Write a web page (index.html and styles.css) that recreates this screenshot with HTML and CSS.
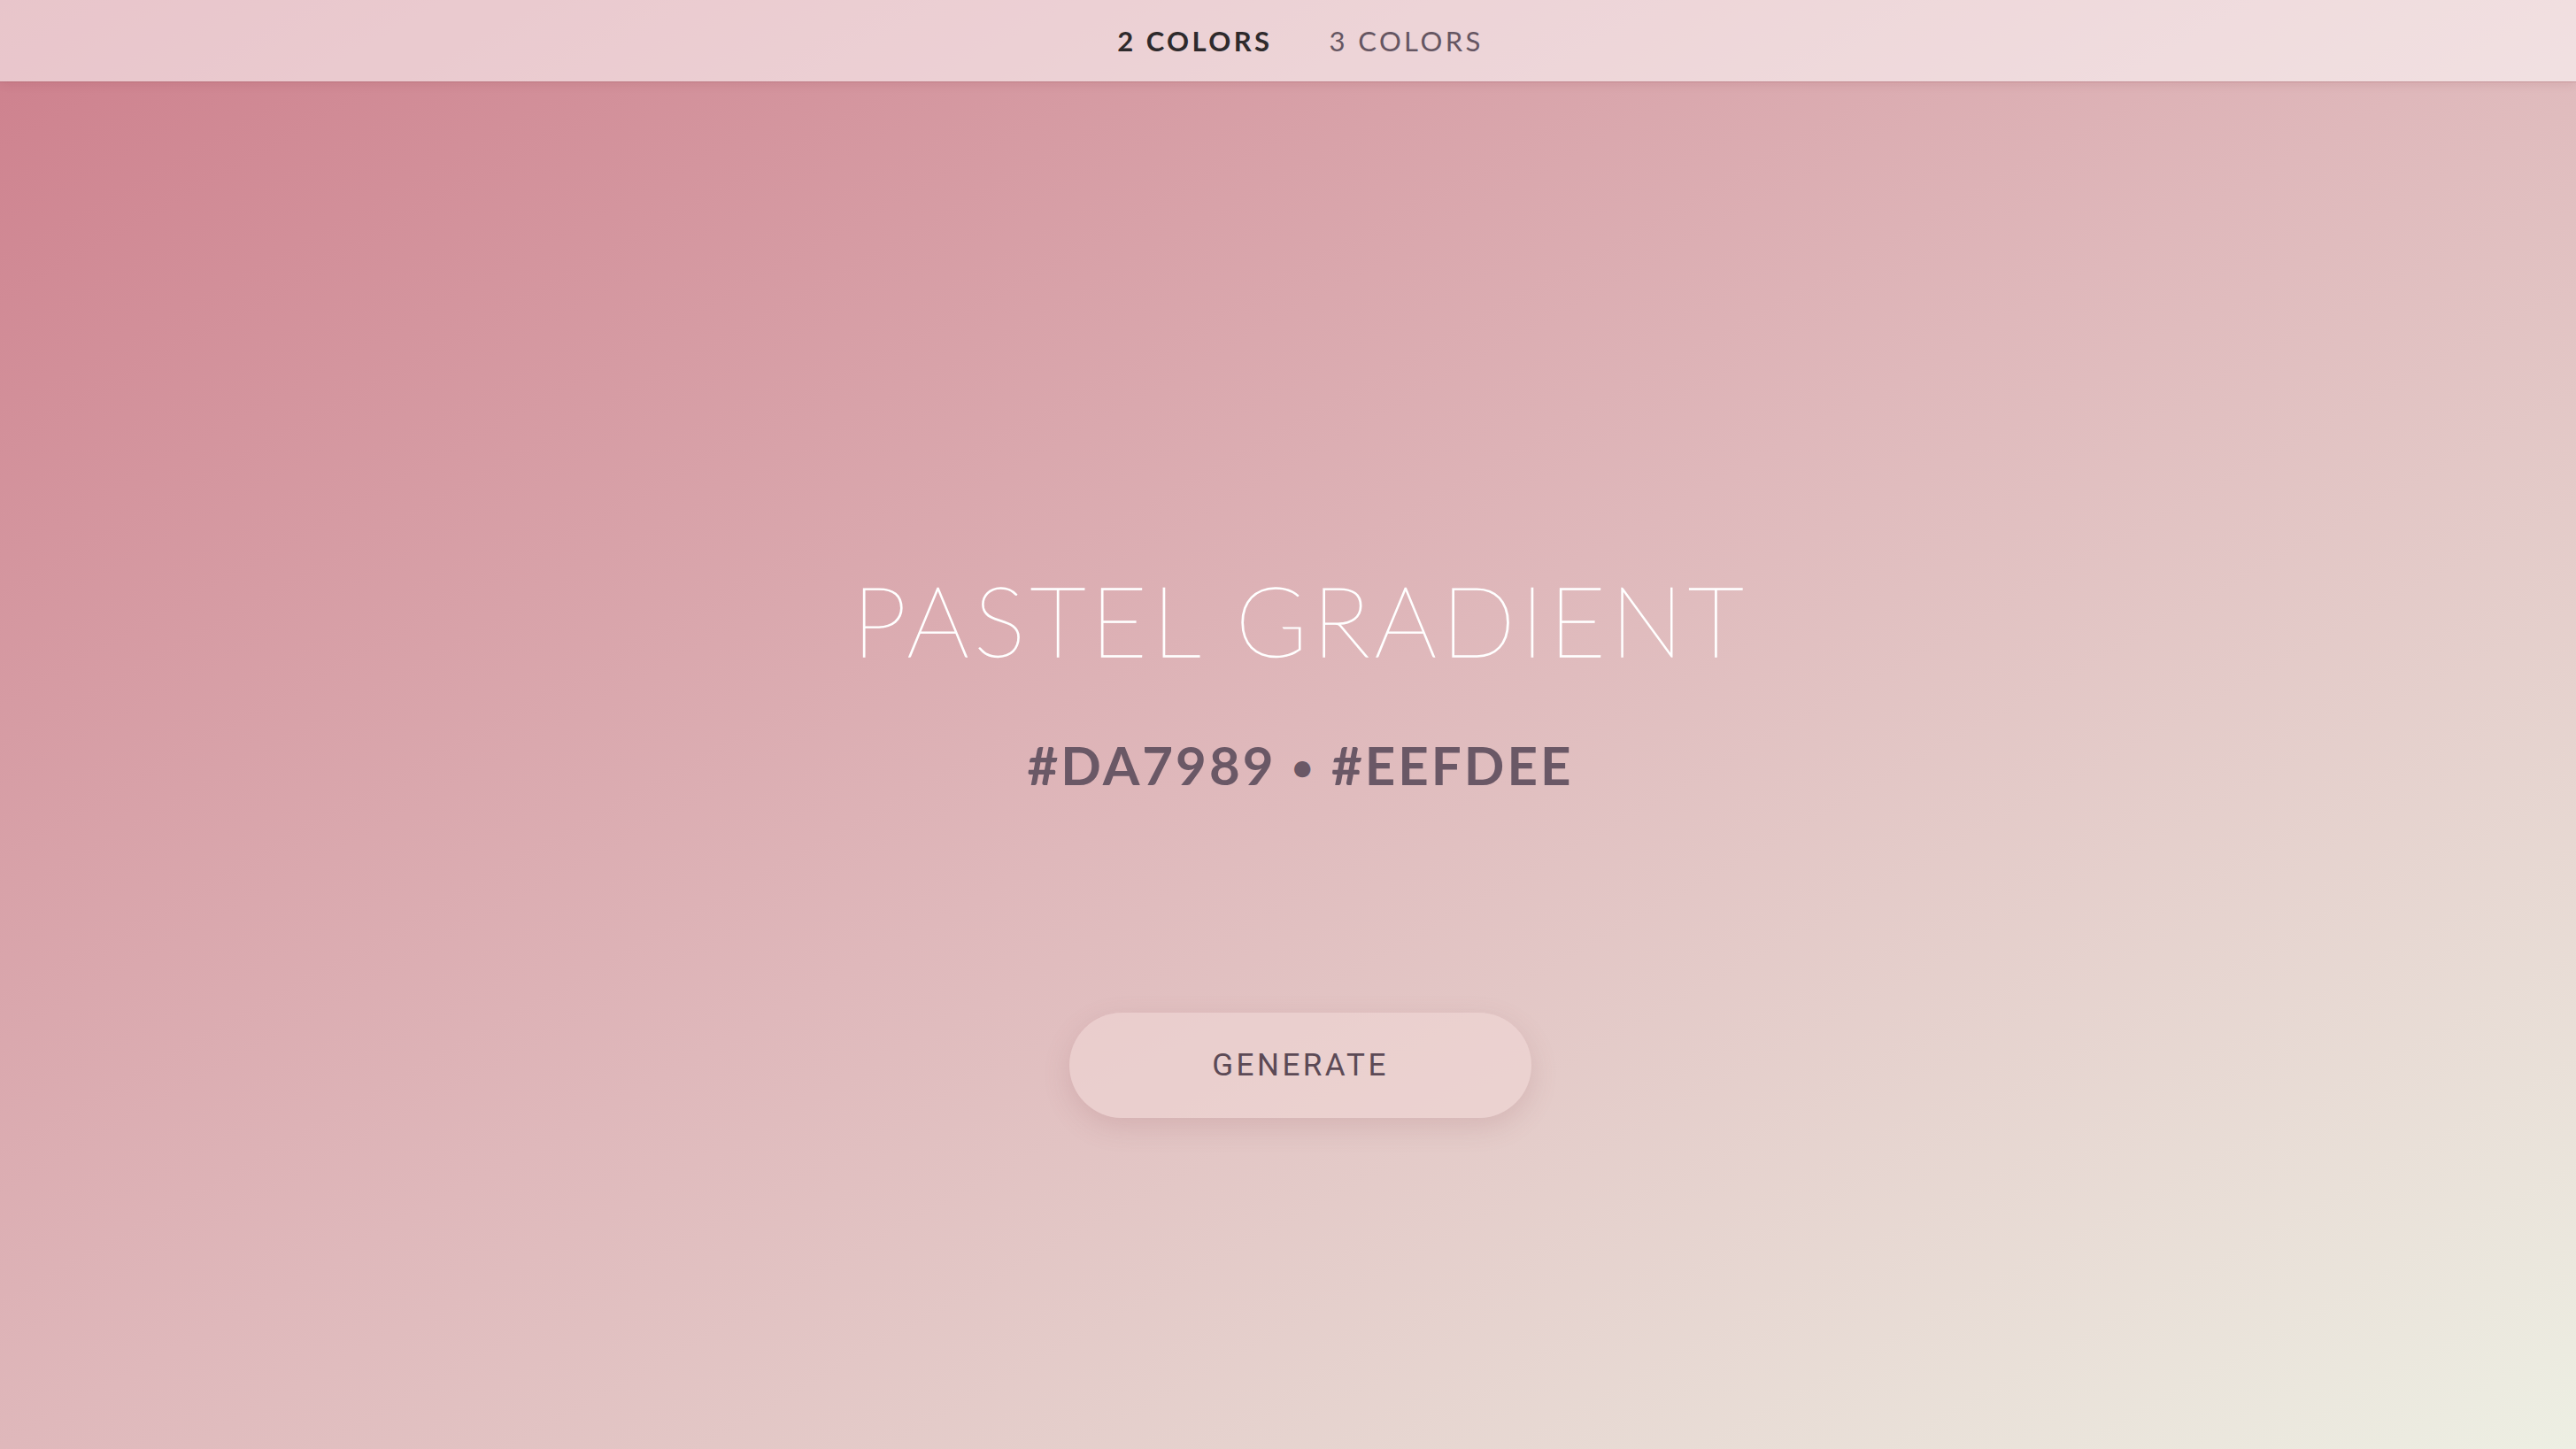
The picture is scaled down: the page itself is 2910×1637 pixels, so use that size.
FILE: index.html
```html
<!DOCTYPE html>
<html lang="en">
<head>
<meta charset="utf-8">
<title>Pastel Gradient</title>
<link rel="stylesheet" href="styles.css">
</head>
<body>
<div class="page">
  <header class="topbar">
    <nav class="tabs">
      <a class="tab tab-active" href="#">2 COLORS</a>
      <a class="tab" href="#">3 COLORS</a>
    </nav>
  </header>
  <main class="hero">
    <h1 class="title">PASTEL GRADIENT</h1>
    <p class="codes">#DA7989 <span class="dot">&bull;</span> #EEFDEE</p>
    <button class="generate" type="button">GENERATE</button>
  </main>
</div>
</body>
</html>
```

FILE: styles.css
```css
html, body {
  margin: 0;
  padding: 0;
  height: 100%;
}

body {
  background: linear-gradient(to bottom right, #cd7f8c 0%, #dfb8bb 50%, #edefe3 100%);
  font-family: "Lato", "Noto Sans", sans-serif;
  overflow: hidden;
}

.page {
  display: flex;
  flex-direction: column;
  height: 100vh;
}

.topbar {
  flex: 0 0 auto;
  height: 92px;
  display: flex;
  align-items: center;
  justify-content: center;
  padding-left: 28px;
  background: rgba(255, 255, 255, 0.55);
  box-shadow: 0 1px 0 rgba(150, 80, 90, 0.25), 0 3px 10px rgba(120, 50, 60, 0.12);
  position: relative;
  z-index: 1;
}

.tabs {
  display: flex;
  gap: 64px;
}

.tab {
  font-size: 31px;
  letter-spacing: 0.11em;
  text-decoration: none;
  color: #655662;
  font-weight: 400;
}

.tab-active {
  color: #2e2a2c;
  font-weight: 700;
}

.hero {
  flex: 1 1 auto;
  display: flex;
  flex-direction: column;
  align-items: center;
  padding-top: 552px;
  padding-left: 28px;
}

.title {
  margin: 0;
  font-size: 110px;
  line-height: 1;
  font-weight: 200;
  color: #ffffff;
  -webkit-text-stroke: 1.3px #ffffff;
  letter-spacing: 0.05em;
}

.codes {
  margin: 80px 0 0;
  font-size: 60px;
  line-height: 1;
  font-weight: 700;
  color: #6a5866;
  letter-spacing: 0.05em;
}

.dot {
  font-size: 0.7em;
  vertical-align: 0.12em;
}

.generate {
  margin-top: 250px;
  width: 522px;
  height: 119px;
  border: none;
  border-radius: 60px;
  background: rgba(240, 215, 214, 0.6);
  box-shadow: 0 10px 30px rgba(150, 90, 95, 0.18);
  font-family: "Roboto", "Noto Sans", sans-serif;
  font-size: 35px;
  letter-spacing: 0.1em;
  color: #5c4a56;
  cursor: pointer;
}
```
